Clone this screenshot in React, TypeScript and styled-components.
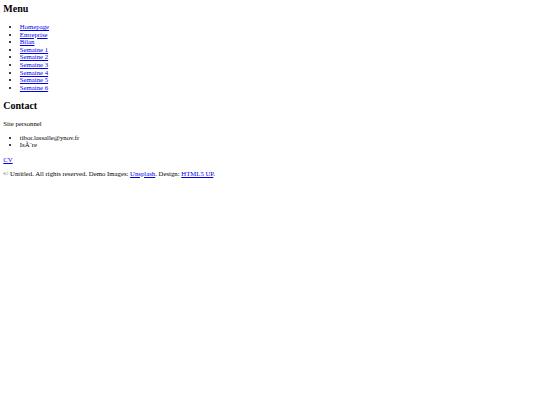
import React from "react";
import styled, { createGlobalStyle } from "styled-components";

const GlobalStyle = createGlobalStyle`
  html, body {
    margin: 0;
    padding: 0;
    background: #ffffff;
  }
`;

const Page = styled.div`
  padding: 3.3px;
  font-family: "Liberation Serif", "Times New Roman", serif;
  font-size: 6.75px;
  line-height: 7.62px;
  color: #000000;
`;

const Nav = styled.nav`
  display: block;
`;

const Heading = styled.h2<{ $first?: boolean }>`
  font-size: 10px;
  line-height: 11.43px;
  font-weight: bold;
  margin: ${(p) => (p.$first ? "0" : "8.25px")} 0 8.25px;
`;

const List = styled.ul`
  margin: 6.62px 0;
  padding-left: 16.56px;
  list-style: disc;
`;

const Item = styled.li`
  display: list-item;
`;

const Link = styled.a`
  color: #0000ee;
  text-decoration: underline;
  text-decoration-thickness: 0.5px;
  text-underline-offset: 1px;
`;

const Paragraph = styled.p`
  margin: 6.62px 0;
`;

const menuItems = [
  "Homepage",
  "Entreprise",
  "Bilan",
  "Semaine 1",
  "Semaine 2",
  "Semaine 3",
  "Semaine 4",
  "Semaine 5",
  "Semaine 6",
];

export default function App() {
  return (
    <>
      <GlobalStyle />
      <Page>
        <Nav>
          <Heading $first>Menu</Heading>
          <List>
            {menuItems.map((label) => (
              <Item key={label}>
                <Link href="#">{label}</Link>
              </Item>
            ))}
          </List>
        </Nav>
        <Heading>Contact</Heading>
        <Paragraph>Site personnel</Paragraph>
        <List>
          <Item>tibor.lassalle@ynov.fr</Item>
          <Item>IsÃ¨re</Item>
        </List>
        <Paragraph>
          <Link href="#">CV</Link>
        </Paragraph>
        <Paragraph>
          © Untitled. All rights reserved. Demo Images: <Link href="#">Unsplash</Link>. Design:{" "}
          <Link href="#">HTML5 UP</Link>.
        </Paragraph>
      </Page>
    </>
  );
}
